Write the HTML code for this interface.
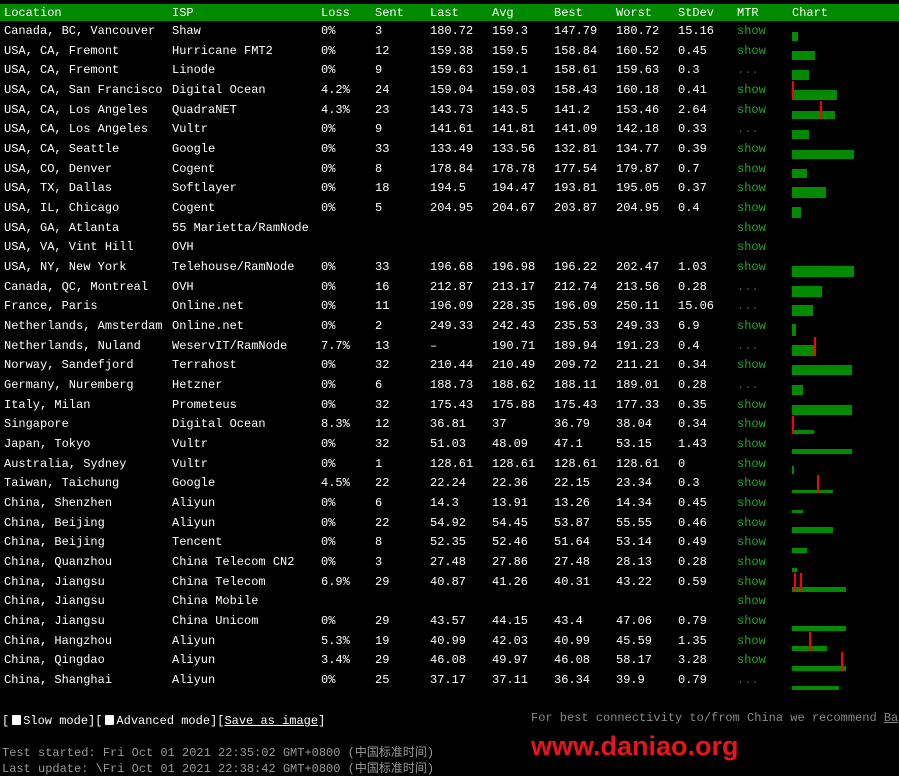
<!DOCTYPE html>
<html><head><meta charset="utf-8"><style>
body{margin:0;background:#000;width:899px;height:776px;overflow:hidden;position:relative;font-family:"Liberation Mono","Noto Sans CJK SC",monospace;font-size:12px;color:#fff}
.hd{position:absolute;left:0;top:4px;width:899px;height:17px;background:#008a00}
.r{position:absolute;left:0;width:899px;height:20px;line-height:20px;white-space:pre}
.r span{position:absolute;top:0}
.c0{left:4px}.c1{left:172px}.c2{left:321px}.c3{left:375px}.c4{left:430px}.c5{left:492px}.c6{left:554px}.c7{left:616px}.c8{left:678px}.c9{left:737px}.c10{left:792px}
.s{color:#1faa1f}.d{color:#555}
.b{position:absolute;background:#008a00;left:792px}
.x{position:absolute;background:#f00;width:2px}
.ft{position:absolute;white-space:pre;color:#999}
.cb{display:inline-block;width:9px;height:10px;background:#fff;border-radius:1px;vertical-align:-1px;margin:0 2px 0 3px}
</style></head><body>
<div class="hd"></div>
<div class="r" style="top:3px;height:20px"><span class="c0">Location</span><span class="c1">ISP</span><span class="c2">Loss</span><span class="c3">Sent</span><span class="c4">Last</span><span class="c5">Avg</span><span class="c6">Best</span><span class="c7">Worst</span><span class="c8">StDev</span><span class="c9">MTR</span><span class="c10">Chart</span></div>
<div class="r" style="top:21px"><span class="c0">Canada, BC, Vancouver</span><span class="c1">Shaw</span><span class="c2">0%</span><span class="c3">3</span><span class="c4">180.72</span><span class="c5">159.3</span><span class="c6">147.79</span><span class="c7">180.72</span><span class="c8">15.16</span><span class="c9 s">show</span></div>
<div class="r" style="top:41px"><span class="c0">USA, CA, Fremont</span><span class="c1">Hurricane FMT2</span><span class="c2">0%</span><span class="c3">12</span><span class="c4">159.38</span><span class="c5">159.5</span><span class="c6">158.84</span><span class="c7">160.52</span><span class="c8">0.45</span><span class="c9 s">show</span></div>
<div class="r" style="top:60px"><span class="c0">USA, CA, Fremont</span><span class="c1">Linode</span><span class="c2">0%</span><span class="c3">9</span><span class="c4">159.63</span><span class="c5">159.1</span><span class="c6">158.61</span><span class="c7">159.63</span><span class="c8">0.3</span><span class="c9 d">...</span></div>
<div class="r" style="top:80px"><span class="c0">USA, CA, San Francisco</span><span class="c1">Digital Ocean</span><span class="c2">4.2%</span><span class="c3">24</span><span class="c4">159.04</span><span class="c5">159.03</span><span class="c6">158.43</span><span class="c7">160.18</span><span class="c8">0.41</span><span class="c9 s">show</span></div>
<div class="r" style="top:100px"><span class="c0">USA, CA, Los Angeles</span><span class="c1">QuadraNET</span><span class="c2">4.3%</span><span class="c3">23</span><span class="c4">143.73</span><span class="c5">143.5</span><span class="c6">141.2</span><span class="c7">153.46</span><span class="c8">2.64</span><span class="c9 s">show</span></div>
<div class="r" style="top:119px"><span class="c0">USA, CA, Los Angeles</span><span class="c1">Vultr</span><span class="c2">0%</span><span class="c3">9</span><span class="c4">141.61</span><span class="c5">141.81</span><span class="c6">141.09</span><span class="c7">142.18</span><span class="c8">0.33</span><span class="c9 d">...</span></div>
<div class="r" style="top:139px"><span class="c0">USA, CA, Seattle</span><span class="c1">Google</span><span class="c2">0%</span><span class="c3">33</span><span class="c4">133.49</span><span class="c5">133.56</span><span class="c6">132.81</span><span class="c7">134.77</span><span class="c8">0.39</span><span class="c9 s">show</span></div>
<div class="r" style="top:159px"><span class="c0">USA, CO, Denver</span><span class="c1">Cogent</span><span class="c2">0%</span><span class="c3">8</span><span class="c4">178.84</span><span class="c5">178.78</span><span class="c6">177.54</span><span class="c7">179.87</span><span class="c8">0.7</span><span class="c9 s">show</span></div>
<div class="r" style="top:178px"><span class="c0">USA, TX, Dallas</span><span class="c1">Softlayer</span><span class="c2">0%</span><span class="c3">18</span><span class="c4">194.5</span><span class="c5">194.47</span><span class="c6">193.81</span><span class="c7">195.05</span><span class="c8">0.37</span><span class="c9 s">show</span></div>
<div class="r" style="top:198px"><span class="c0">USA, IL, Chicago</span><span class="c1">Cogent</span><span class="c2">0%</span><span class="c3">5</span><span class="c4">204.95</span><span class="c5">204.67</span><span class="c6">203.87</span><span class="c7">204.95</span><span class="c8">0.4</span><span class="c9 s">show</span></div>
<div class="r" style="top:218px"><span class="c0">USA, GA, Atlanta</span><span class="c1">55 Marietta/RamNode</span><span class="c9 s">show</span></div>
<div class="r" style="top:237px"><span class="c0">USA, VA, Vint Hill</span><span class="c1">OVH</span><span class="c9 s">show</span></div>
<div class="r" style="top:257px"><span class="c0">USA, NY, New York</span><span class="c1">Telehouse/RamNode</span><span class="c2">0%</span><span class="c3">33</span><span class="c4">196.68</span><span class="c5">196.98</span><span class="c6">196.22</span><span class="c7">202.47</span><span class="c8">1.03</span><span class="c9 s">show</span></div>
<div class="r" style="top:277px"><span class="c0">Canada, QC, Montreal</span><span class="c1">OVH</span><span class="c2">0%</span><span class="c3">16</span><span class="c4">212.87</span><span class="c5">213.17</span><span class="c6">212.74</span><span class="c7">213.56</span><span class="c8">0.28</span><span class="c9 d">...</span></div>
<div class="r" style="top:296px"><span class="c0">France, Paris</span><span class="c1">Online.net</span><span class="c2">0%</span><span class="c3">11</span><span class="c4">196.09</span><span class="c5">228.35</span><span class="c6">196.09</span><span class="c7">250.11</span><span class="c8">15.06</span><span class="c9 d">...</span></div>
<div class="r" style="top:316px"><span class="c0">Netherlands, Amsterdam</span><span class="c1">Online.net</span><span class="c2">0%</span><span class="c3">2</span><span class="c4">249.33</span><span class="c5">242.43</span><span class="c6">235.53</span><span class="c7">249.33</span><span class="c8">6.9</span><span class="c9 s">show</span></div>
<div class="r" style="top:336px"><span class="c0">Netherlands, Nuland</span><span class="c1">WeservIT/RamNode</span><span class="c2">7.7%</span><span class="c3">13</span><span class="c4">–</span><span class="c5">190.71</span><span class="c6">189.94</span><span class="c7">191.23</span><span class="c8">0.4</span><span class="c9 d">...</span></div>
<div class="r" style="top:355px"><span class="c0">Norway, Sandefjord</span><span class="c1">Terrahost</span><span class="c2">0%</span><span class="c3">32</span><span class="c4">210.44</span><span class="c5">210.49</span><span class="c6">209.72</span><span class="c7">211.21</span><span class="c8">0.34</span><span class="c9 s">show</span></div>
<div class="r" style="top:375px"><span class="c0">Germany, Nuremberg</span><span class="c1">Hetzner</span><span class="c2">0%</span><span class="c3">6</span><span class="c4">188.73</span><span class="c5">188.62</span><span class="c6">188.11</span><span class="c7">189.01</span><span class="c8">0.28</span><span class="c9 d">...</span></div>
<div class="r" style="top:395px"><span class="c0">Italy, Milan</span><span class="c1">Prometeus</span><span class="c2">0%</span><span class="c3">32</span><span class="c4">175.43</span><span class="c5">175.88</span><span class="c6">175.43</span><span class="c7">177.33</span><span class="c8">0.35</span><span class="c9 s">show</span></div>
<div class="r" style="top:414px"><span class="c0">Singapore</span><span class="c1">Digital Ocean</span><span class="c2">8.3%</span><span class="c3">12</span><span class="c4">36.81</span><span class="c5">37</span><span class="c6">36.79</span><span class="c7">38.04</span><span class="c8">0.34</span><span class="c9 s">show</span></div>
<div class="r" style="top:434px"><span class="c0">Japan, Tokyo</span><span class="c1">Vultr</span><span class="c2">0%</span><span class="c3">32</span><span class="c4">51.03</span><span class="c5">48.09</span><span class="c6">47.1</span><span class="c7">53.15</span><span class="c8">1.43</span><span class="c9 s">show</span></div>
<div class="r" style="top:454px"><span class="c0">Australia, Sydney</span><span class="c1">Vultr</span><span class="c2">0%</span><span class="c3">1</span><span class="c4">128.61</span><span class="c5">128.61</span><span class="c6">128.61</span><span class="c7">128.61</span><span class="c8">0</span><span class="c9 s">show</span></div>
<div class="r" style="top:473px"><span class="c0">Taiwan, Taichung</span><span class="c1">Google</span><span class="c2">4.5%</span><span class="c3">22</span><span class="c4">22.24</span><span class="c5">22.36</span><span class="c6">22.15</span><span class="c7">23.34</span><span class="c8">0.3</span><span class="c9 s">show</span></div>
<div class="r" style="top:493px"><span class="c0">China, Shenzhen</span><span class="c1">Aliyun</span><span class="c2">0%</span><span class="c3">6</span><span class="c4">14.3</span><span class="c5">13.91</span><span class="c6">13.26</span><span class="c7">14.34</span><span class="c8">0.45</span><span class="c9 s">show</span></div>
<div class="r" style="top:513px"><span class="c0">China, Beijing</span><span class="c1">Aliyun</span><span class="c2">0%</span><span class="c3">22</span><span class="c4">54.92</span><span class="c5">54.45</span><span class="c6">53.87</span><span class="c7">55.55</span><span class="c8">0.46</span><span class="c9 s">show</span></div>
<div class="r" style="top:532px"><span class="c0">China, Beijing</span><span class="c1">Tencent</span><span class="c2">0%</span><span class="c3">8</span><span class="c4">52.35</span><span class="c5">52.46</span><span class="c6">51.64</span><span class="c7">53.14</span><span class="c8">0.49</span><span class="c9 s">show</span></div>
<div class="r" style="top:552px"><span class="c0">China, Quanzhou</span><span class="c1">China Telecom CN2</span><span class="c2">0%</span><span class="c3">3</span><span class="c4">27.48</span><span class="c5">27.86</span><span class="c6">27.48</span><span class="c7">28.13</span><span class="c8">0.28</span><span class="c9 s">show</span></div>
<div class="r" style="top:572px"><span class="c0">China, Jiangsu</span><span class="c1">China Telecom</span><span class="c2">6.9%</span><span class="c3">29</span><span class="c4">40.87</span><span class="c5">41.26</span><span class="c6">40.31</span><span class="c7">43.22</span><span class="c8">0.59</span><span class="c9 s">show</span></div>
<div class="r" style="top:591px"><span class="c0">China, Jiangsu</span><span class="c1">China Mobile</span><span class="c9 s">show</span></div>
<div class="r" style="top:611px"><span class="c0">China, Jiangsu</span><span class="c1">China Unicom</span><span class="c2">0%</span><span class="c3">29</span><span class="c4">43.57</span><span class="c5">44.15</span><span class="c6">43.4</span><span class="c7">47.06</span><span class="c8">0.79</span><span class="c9 s">show</span></div>
<div class="r" style="top:631px"><span class="c0">China, Hangzhou</span><span class="c1">Aliyun</span><span class="c2">5.3%</span><span class="c3">19</span><span class="c4">40.99</span><span class="c5">42.03</span><span class="c6">40.99</span><span class="c7">45.59</span><span class="c8">1.35</span><span class="c9 s">show</span></div>
<div class="r" style="top:650px"><span class="c0">China, Qingdao</span><span class="c1">Aliyun</span><span class="c2">3.4%</span><span class="c3">29</span><span class="c4">46.08</span><span class="c5">49.97</span><span class="c6">46.08</span><span class="c7">58.17</span><span class="c8">3.28</span><span class="c9 s">show</span></div>
<div class="r" style="top:670px"><span class="c0">China, Shanghai</span><span class="c1">Aliyun</span><span class="c2">0%</span><span class="c3">25</span><span class="c4">37.17</span><span class="c5">37.11</span><span class="c6">36.34</span><span class="c7">39.9</span><span class="c8">0.79</span><span class="c9 d">...</span></div>

<div class="b" style="top:32px;height:9px;width:6px"></div>
<div class="b" style="top:51px;height:9px;width:23px"></div>
<div class="b" style="top:70px;height:10px;width:17px"></div>
<div class="b" style="top:90px;height:10px;width:45px"></div><div class="x" style="left:792px;top:81px;height:19px"></div>
<div class="b" style="top:111px;height:8px;width:43px"></div><div class="x" style="left:820px;top:101px;height:18px"></div>
<div class="b" style="top:130px;height:9px;width:17px"></div>
<div class="b" style="top:150px;height:9px;width:62px"></div>
<div class="b" style="top:169px;height:9px;width:15px"></div>
<div class="b" style="top:187px;height:11px;width:34px"></div>
<div class="b" style="top:207px;height:11px;width:9px"></div>
<div class="b" style="top:266px;height:11px;width:62px"></div>
<div class="b" style="top:286px;height:11px;width:30px"></div>
<div class="b" style="top:305px;height:11px;width:21px"></div>
<div class="b" style="top:324px;height:12px;width:4px"></div>
<div class="b" style="top:345px;height:11px;width:23px"></div><div class="x" style="left:814px;top:337px;height:19px"></div>
<div class="b" style="top:365px;height:10px;width:60px"></div>
<div class="b" style="top:385px;height:10px;width:11px"></div>
<div class="b" style="top:405px;height:10px;width:60px"></div>
<div class="b" style="top:430px;height:4px;width:22px"></div><div class="x" style="left:792px;top:416px;height:18px"></div>
<div class="b" style="top:449px;height:5px;width:60px"></div>
<div class="b" style="top:466px;height:8px;width:2px"></div>
<div class="b" style="top:490px;height:3px;width:41px"></div><div class="x" style="left:817px;top:475px;height:18px"></div>
<div class="b" style="top:510px;height:3px;width:11px"></div>
<div class="b" style="top:527px;height:6px;width:41px"></div>
<div class="b" style="top:548px;height:5px;width:15px"></div>
<div class="b" style="top:568px;height:4px;width:5px"></div>
<div class="b" style="top:587px;height:5px;width:54px"></div><div class="x" style="left:794px;top:573px;height:19px"></div><div class="x" style="left:800px;top:573px;height:19px"></div>
<div class="b" style="top:626px;height:5px;width:54px"></div>
<div class="b" style="top:646px;height:5px;width:35px"></div><div class="x" style="left:809px;top:632px;height:19px"></div>
<div class="b" style="top:666px;height:5px;width:54px"></div><div class="x" style="left:841px;top:652px;height:19px"></div>
<div class="b" style="top:686px;height:4px;width:47px"></div>

<div class="ft" style="left:2px;top:714px;color:#fff;font-size:12px">[<span class="cb"></span>Slow mode][<span class="cb"></span>Advanced mode][<u>Save as image</u>]</div>
<div class="ft" style="left:531px;top:711px;color:#888">For best connectivity to/from China we recommend <u>Ba</u></div>
<div class="ft" style="left:2px;top:743px;color:#999">Test started: Fri Oct 01 2021 22:35:02 GMT+0800 (中国标准时间)</div>
<div class="ft" style="left:2px;top:759px;color:#999">Last update: \Fri Oct 01 2021 22:38:42 GMT+0800 (中国标准时间)</div>
<div class="ft" style="left:531px;top:731px;color:#e8141c;font-family:'Liberation Sans',sans-serif;font-size:27px;font-weight:bold">www.daniao.org</div>
</body></html>
